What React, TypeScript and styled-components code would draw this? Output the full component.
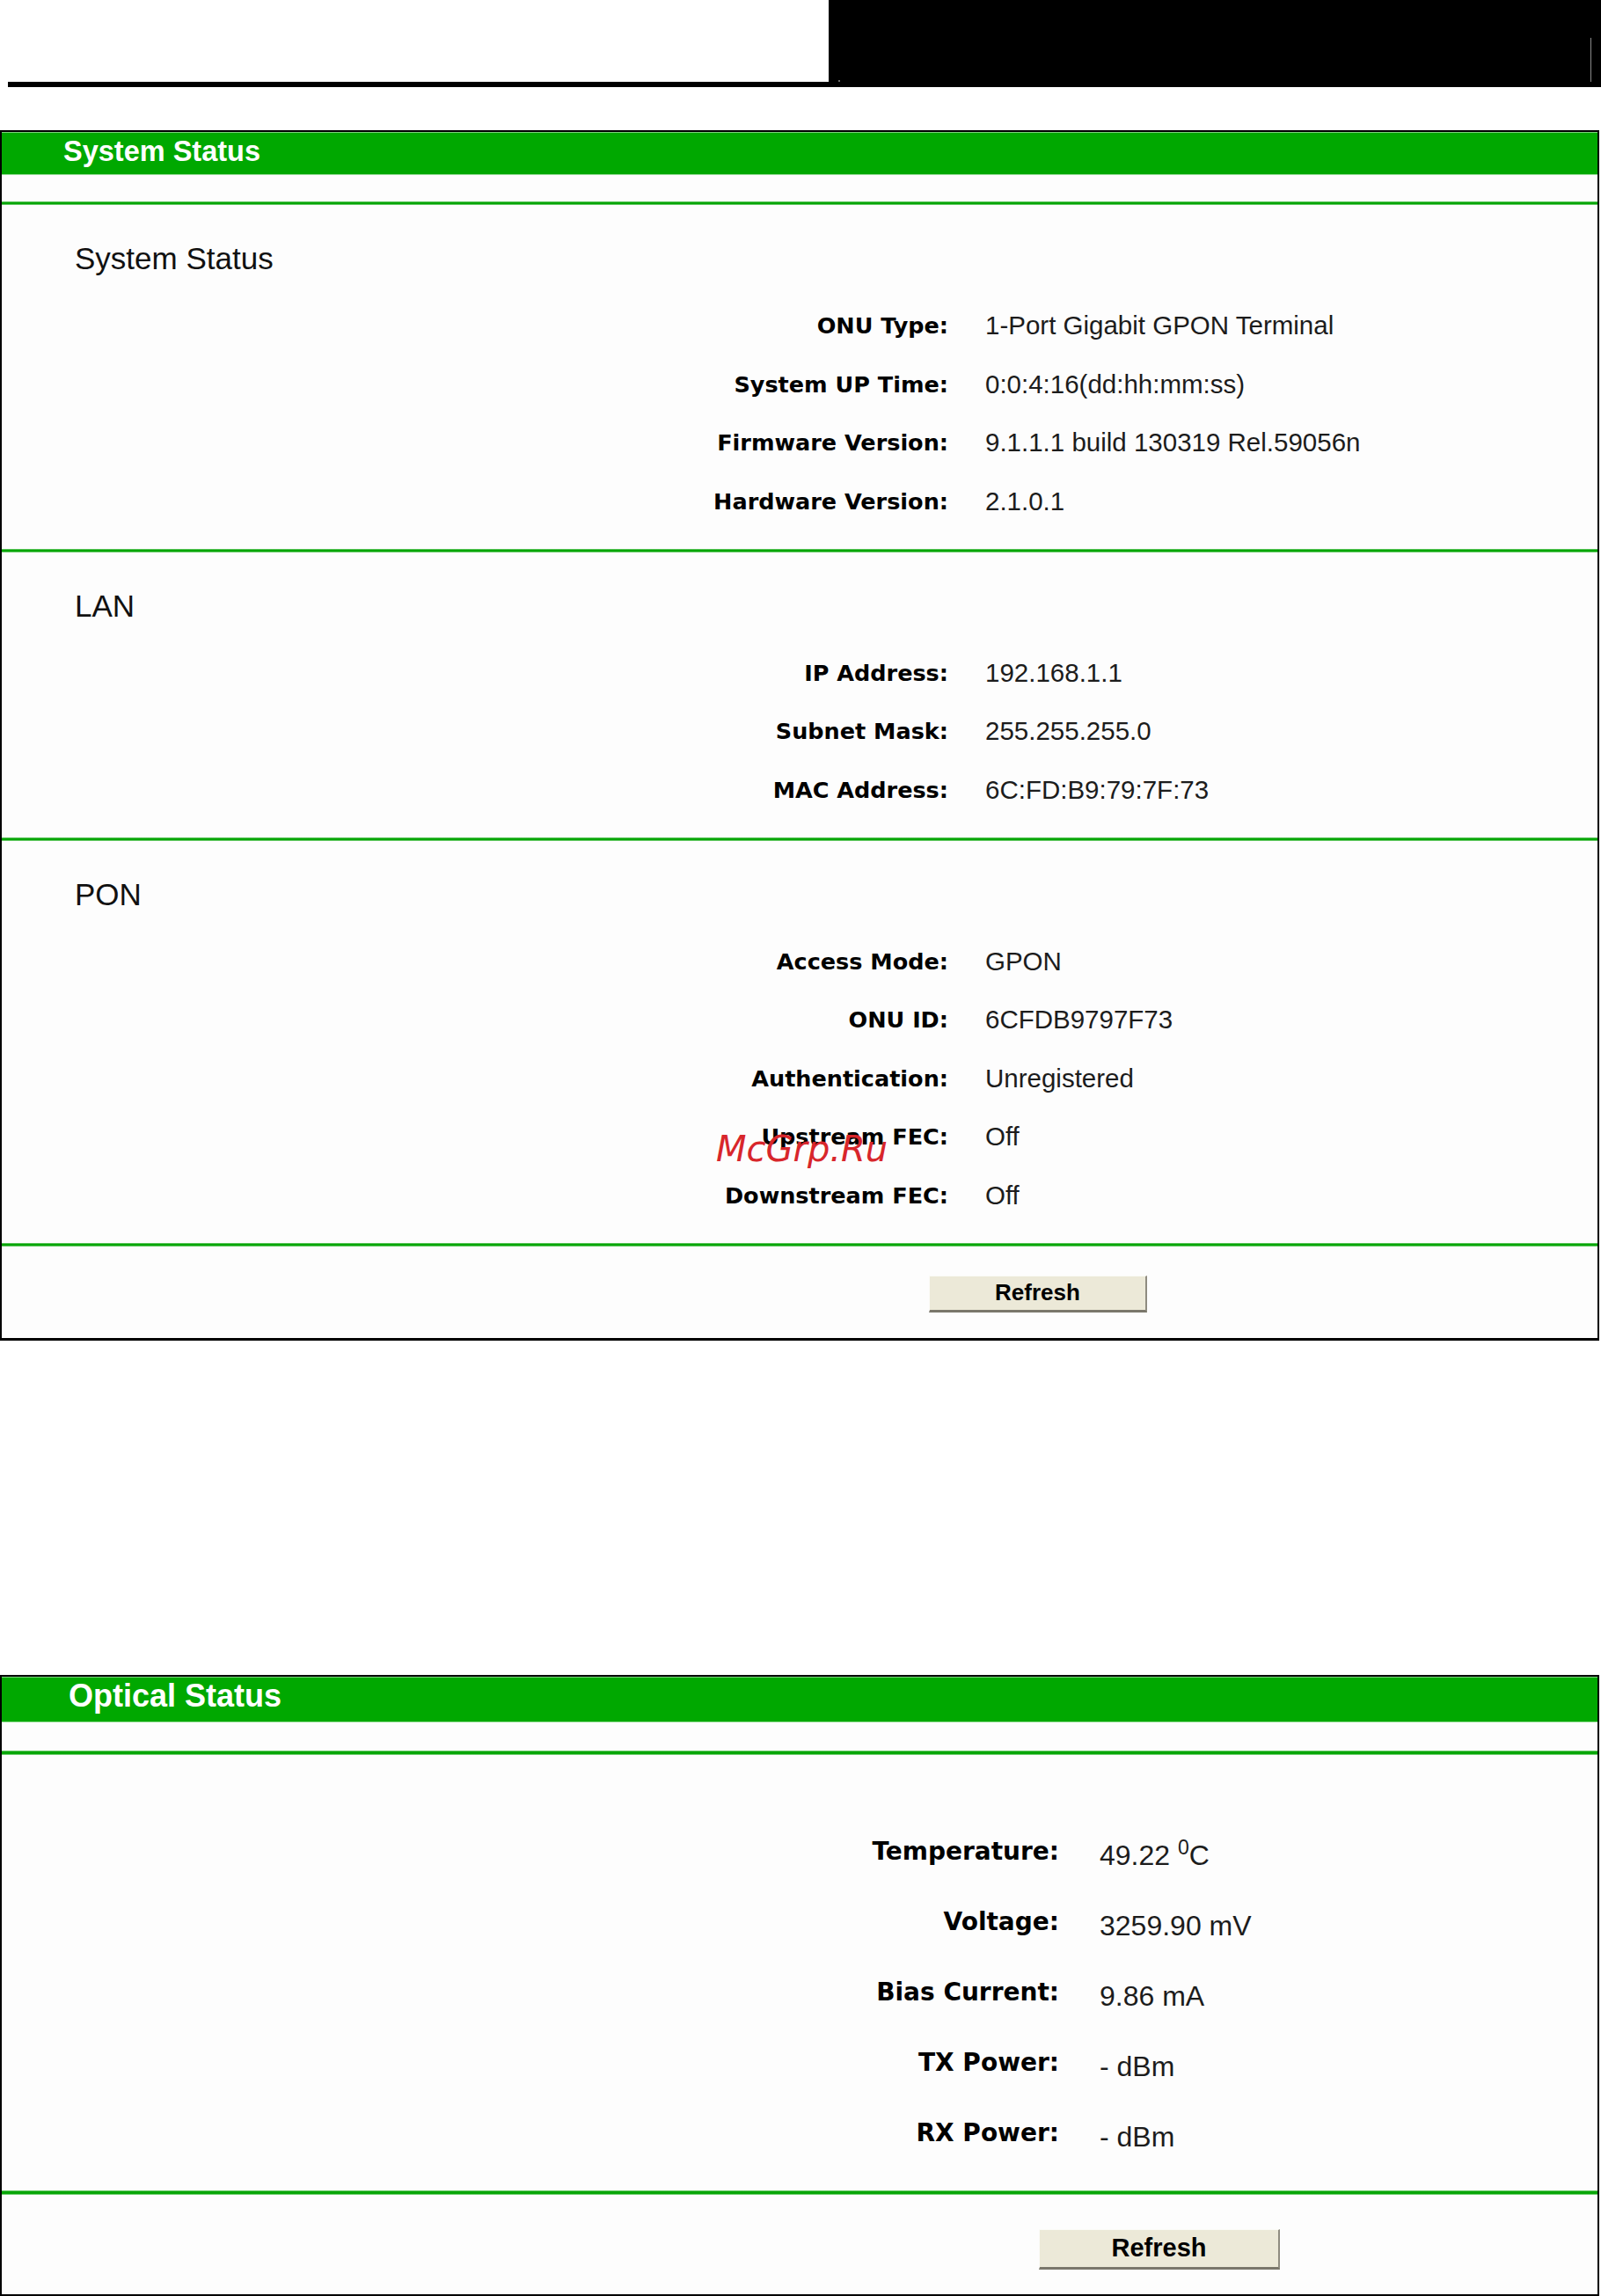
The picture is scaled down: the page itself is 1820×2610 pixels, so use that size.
import React from "react";
import styled, { createGlobalStyle } from "styled-components";

const GlobalStyle = createGlobalStyle`
  html, body {
    margin: 0;
    padding: 0;
    background: #fff;
  }
  body {
    font-family: "Liberation Sans", Arial, sans-serif;
    color: #000;
  }
`;

type Item = { label: string; value: React.ReactNode; mark?: boolean };

type Metrics = {
  headerH: number;
  headerSize: number;
  headerPad: number;
  headerLift: number;
  stripH: number;
  lineH: number;
  labelCol: number;
  gap: number;
  rowH: number;
  labelSize: number;
  valueSize: number;
  valueShift: number;
  btnLeft: number;
  btnTop: number;
  btnBottom: number;
  btnW: number;
  btnH: number;
  btnSize: number;
};

const Sup = styled.sup`
  font-size: 0.72em;
  vertical-align: 0.5em;
  line-height: 0;
`;

const systemMetrics: Metrics = {
  headerH: 49,
  headerSize: 32.5,
  headerPad: 70,
  headerLift: 5,
  stripH: 30,
  lineH: 4,
  labelCol: 1076,
  gap: 42,
  rowH: 66.5,
  labelSize: 25.5,
  valueSize: 29.5,
  valueShift: 0,
  btnLeft: 1054,
  btnTop: 33,
  btnBottom: 29,
  btnW: 248,
  btnH: 42,
  btnSize: 26,
};

const opticalMetrics: Metrics = {
  headerH: 52,
  headerSize: 36,
  headerPad: 76,
  headerLift: 8,
  stripH: 32,
  lineH: 5,
  labelCol: 1202,
  gap: 46,
  rowH: 80,
  labelSize: 28,
  valueSize: 32,
  valueShift: 10,
  btnLeft: 1179,
  btnTop: 39,
  btnBottom: 28,
  btnW: 274,
  btnH: 46,
  btnSize: 29,
};

const systemRows: Item[] = [
  { label: "ONU Type:", value: "1-Port Gigabit GPON Terminal" },
  { label: "System UP Time:", value: "0:0:4:16(dd:hh:mm:ss)" },
  { label: "Firmware Version:", value: "9.1.1.1 build 130319 Rel.59056n" },
  { label: "Hardware Version:", value: "2.1.0.1" },
];

const lanRows: Item[] = [
  { label: "IP Address:", value: "192.168.1.1" },
  { label: "Subnet Mask:", value: "255.255.255.0" },
  { label: "MAC Address:", value: "6C:FD:B9:79:7F:73" },
];

const ponRows: Item[] = [
  { label: "Access Mode:", value: "GPON" },
  { label: "ONU ID:", value: "6CFDB9797F73" },
  { label: "Authentication:", value: "Unregistered" },
  { label: "Upstream FEC:", value: "Off", mark: true },
  { label: "Downstream FEC:", value: "Off" },
];

const opticalRows: Item[] = [
  {
    label: "Temperature:",
    value: (
      <>
        49.22 <Sup>0</Sup>C
      </>
    ),
  },
  { label: "Voltage:", value: "3259.90 mV" },
  { label: "Bias Current:", value: "9.86 mA" },
  { label: "TX Power:", value: "- dBm" },
  { label: "RX Power:", value: "- dBm" },
];

const Page = styled.div`
  width: 1820px;
`;

const TopBar = styled.div`
  display: flex;
  height: 99px;
`;

const TopLeft = styled.div`
  flex: 0 0 942px;
  box-sizing: border-box;
  padding-left: 9px;
  display: flex;
  align-items: flex-end;
`;

const TopRule = styled.div`
  flex: 1;
  height: 6px;
  background: #000;
`;

const BlackBlock = styled.div`
  flex: 1;
  background: #000;
  display: flex;
  justify-content: space-between;
  align-items: flex-end;
  padding: 0 11px 6px 11px;
`;

const Tick = styled.div`
  width: 2px;
  height: 2px;
  background: #6b6b6b;
`;

const EdgeLine = styled.div`
  width: 1px;
  height: 50px;
  background: #8a8a8a;
`;

const Panel = styled.section<{ $top: number }>`
  box-sizing: border-box;
  width: 1818px;
  margin-top: ${(p) => p.$top}px;
  border: 2px solid #000;
  border-bottom-width: 3px;
  background: #fff;
`;

const Header = styled.div<{ $m: Metrics }>`
  box-sizing: border-box;
  height: ${(p) => p.$m.headerH}px;
  padding: 0 0 ${(p) => p.$m.headerLift}px ${(p) => p.$m.headerPad}px;
  display: flex;
  align-items: center;
  background: #00a800;
  box-shadow: inset 0 1px 0 #7cd17c, inset 0 -1px 0 #9fdf9f;
  color: #fff;
  font-family: "Liberation Sans", Arial, sans-serif;
  font-weight: bold;
  font-size: ${(p) => p.$m.headerSize}px;
  line-height: 1;
`;

const Strip = styled.div<{ $h: number }>`
  height: ${(p) => p.$h}px;
  background: #fdfdfd;
`;

const Divider = styled.div<{ $h: number }>`
  height: ${(p) => p.$h}px;
  background: linear-gradient(#92d892, #08a608 28%, #08a608 72%, #aee3ae);
`;

const Section = styled.div<{ $top: number; $bottom: number }>`
  padding: ${(p) => p.$top}px 0 ${(p) => p.$bottom}px;
  background: #fdfdfd;
`;

const Title = styled.div`
  height: 40px;
  line-height: 40px;
  padding-left: 83px;
  margin-bottom: 22.75px;
  font-family: "Liberation Sans", Arial, sans-serif;
  font-size: 35px;
  color: #111;
`;

const Row = styled.div<{ $m: Metrics }>`
  position: relative;
  display: grid;
  grid-template-columns: ${(p) => p.$m.labelCol}px 1fr;
  column-gap: ${(p) => p.$m.gap}px;
  align-items: center;
  height: ${(p) => p.$m.rowH}px;
`;

const Label = styled.div<{ $size: number }>`
  text-align: right;
  font-family: "DejaVu Sans", Verdana, sans-serif;
  font-weight: bold;
  font-size: ${(p) => p.$size}px;
  color: #000;
  white-space: nowrap;
`;

const Value = styled.div<{ $size: number; $shift: number }>`
  padding-top: ${(p) => p.$shift}px;
  font-family: "Liberation Sans", Arial, sans-serif;
  font-size: ${(p) => p.$size}px;
  color: #1c1c1c;
  white-space: nowrap;
`;

const Watermark = styled.span`
  position: absolute;
  left: 812px;
  top: 24px;
  font-family: "DejaVu Sans", Verdana, sans-serif;
  font-style: italic;
  font-size: 40px;
  line-height: normal;
  color: #d8262b;
  pointer-events: none;
`;

const ButtonBar = styled.div<{ $m: Metrics }>`
  display: flex;
  padding: ${(p) => p.$m.btnTop}px 0 ${(p) => p.$m.btnBottom}px
    ${(p) => p.$m.btnLeft}px;
  background: #fdfdfd;
`;

const RefreshButton = styled.button<{ $m: Metrics }>`
  box-sizing: border-box;
  width: ${(p) => p.$m.btnW}px;
  height: ${(p) => p.$m.btnH}px;
  padding: 0;
  background: #ece9d8;
  border-style: solid;
  border-width: 1px 2px 3px 1px;
  border-color: #fbfbf7 #8f8c80 #7a776b #fbfbf7;
  font-family: "Liberation Sans", Arial, sans-serif;
  font-weight: bold;
  font-size: ${(p) => p.$m.btnSize}px;
  color: #000;
`;

const Rows: React.FC<{ items: Item[]; m: Metrics }> = ({ items, m }) => (
  <>
    {items.map((it) => (
      <Row key={it.label} $m={m}>
        <Label $size={m.labelSize}>{it.label}</Label>
        <Value $size={m.valueSize} $shift={m.valueShift}>
          {it.value}
        </Value>
        {it.mark && <Watermark>McGrp.Ru</Watermark>}
      </Row>
    ))}
  </>
);

export default function App() {
  const s = systemMetrics;
  const o = opticalMetrics;
  return (
    <Page>
      <GlobalStyle />
      <TopBar>
        <TopLeft>
          <TopRule />
        </TopLeft>
        <BlackBlock>
          <Tick />
          <EdgeLine />
        </BlackBlock>
      </TopBar>

      <Panel $top={49}>
        <Header $m={s}>System Status</Header>
        <Strip $h={s.stripH} />
        <Divider $h={s.lineH} />
        <Section $top={41} $bottom={20.75}>
          <Title>System Status</Title>
          <Rows items={systemRows} m={s} />
        </Section>
        <Divider $h={s.lineH} />
        <Section $top={41} $bottom={20.75}>
          <Title>LAN</Title>
          <Rows items={lanRows} m={s} />
        </Section>
        <Divider $h={s.lineH} />
        <Section $top={41} $bottom={20.75}>
          <Title>PON</Title>
          <Rows items={ponRows} m={s} />
        </Section>
        <Divider $h={s.lineH} />
        <ButtonBar $m={s}>
          <RefreshButton $m={s}>Refresh</RefreshButton>
        </ButtonBar>
      </Panel>

      <Panel $top={380}>
        <Header $m={o}>Optical Status</Header>
        <Strip $h={o.stripH} />
        <Divider $h={o.lineH} />
        <Section $top={70} $bottom={25}>
          <Rows items={opticalRows} m={o} />
        </Section>
        <Divider $h={o.lineH} />
        <ButtonBar $m={o}>
          <RefreshButton $m={o}>Refresh</RefreshButton>
        </ButtonBar>
      </Panel>
    </Page>
  );
}
